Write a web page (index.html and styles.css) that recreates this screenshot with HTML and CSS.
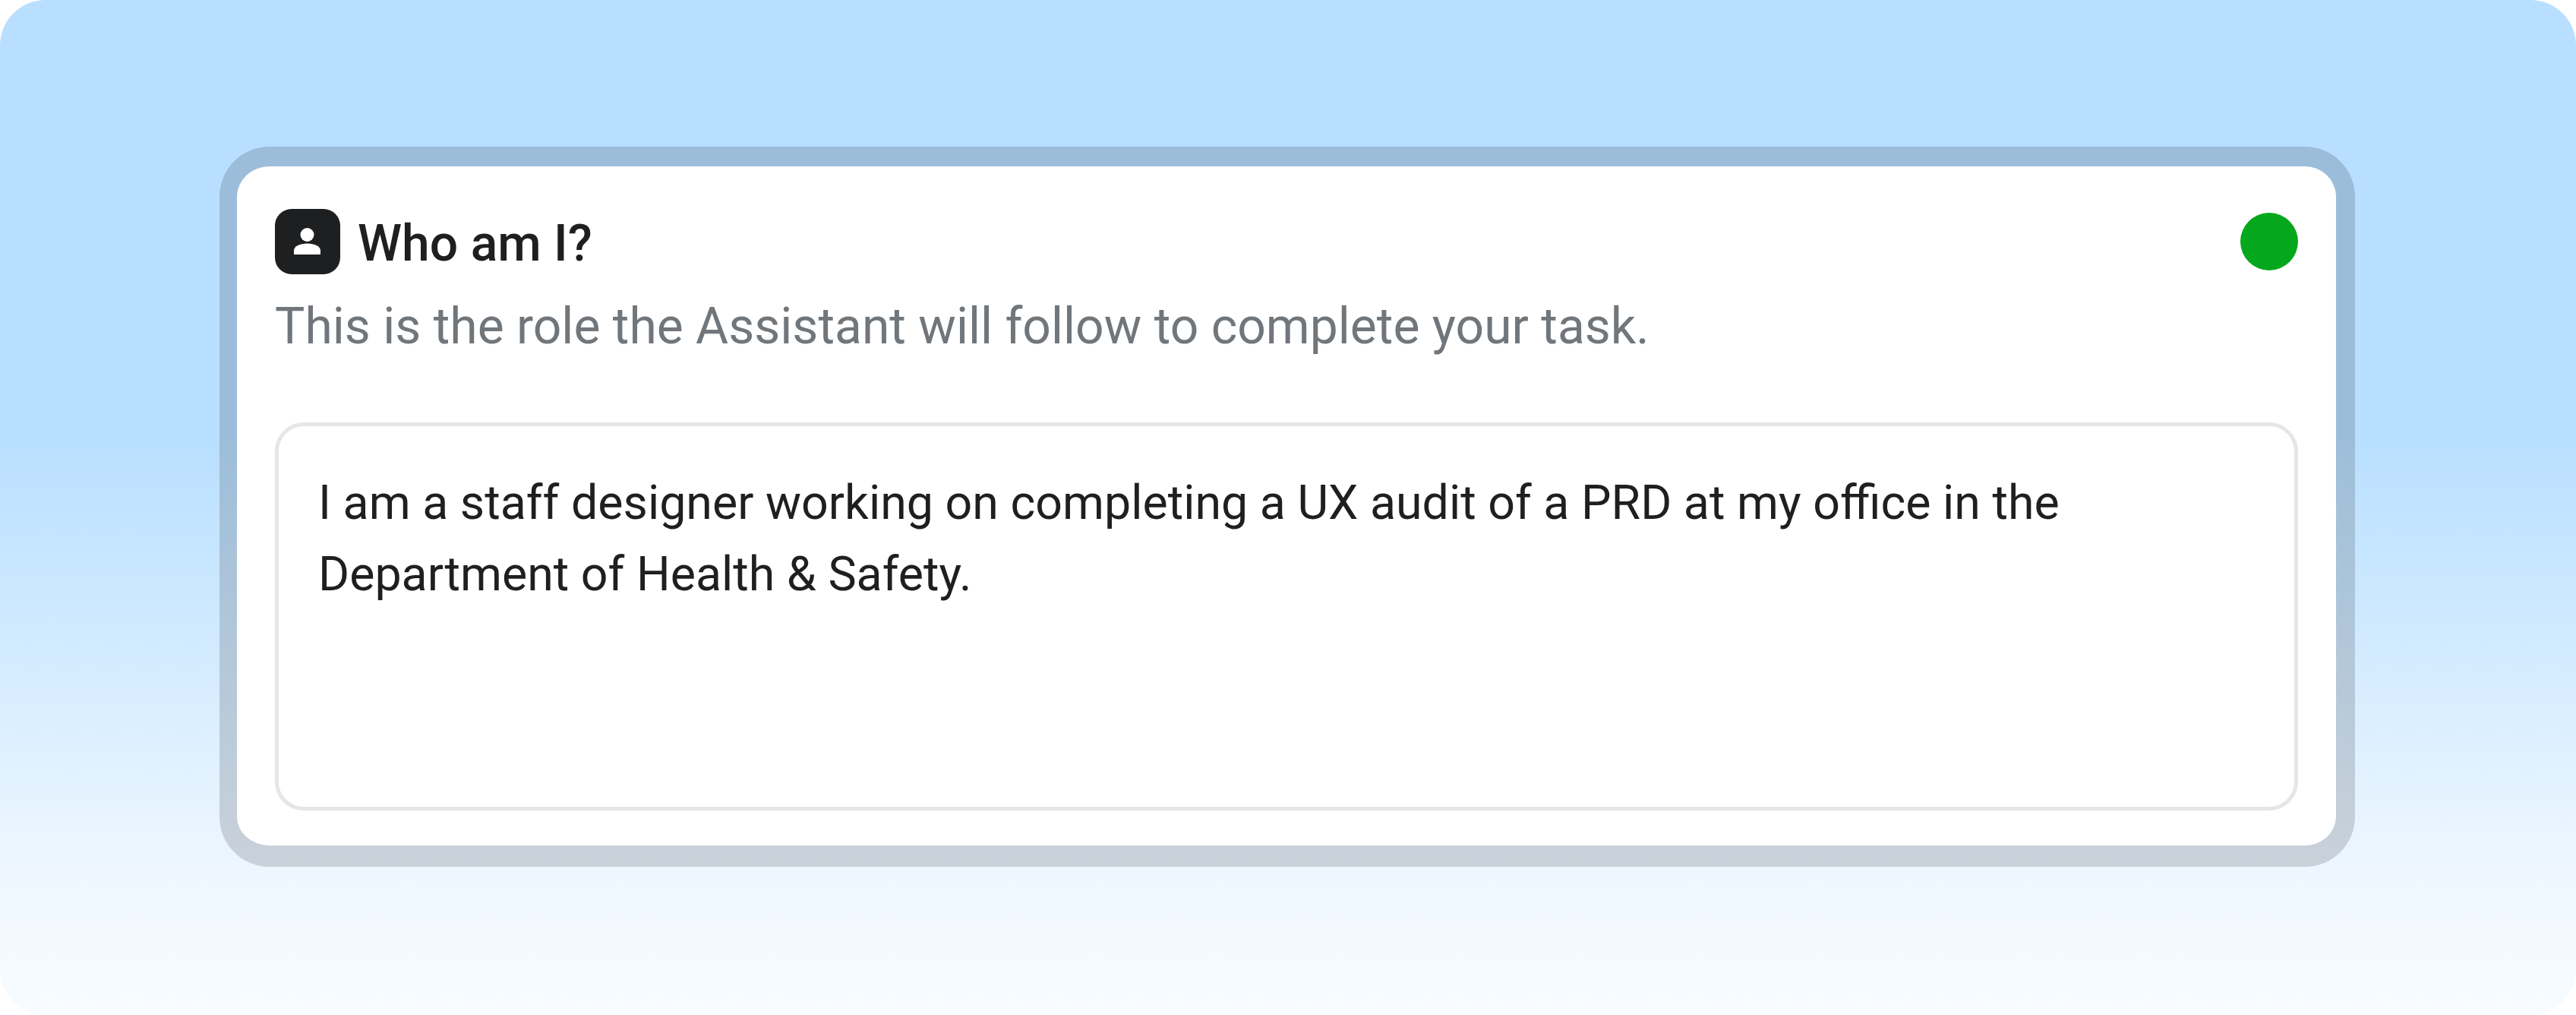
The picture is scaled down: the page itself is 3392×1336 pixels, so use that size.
FILE: index.html
```html
<!DOCTYPE html>
<html lang="en">

<head>
    <meta charset="UTF-8">
    <meta name="viewport" content="width=device-width, initial-scale=1.0">
    <title>Who am I?</title>
    <link rel="stylesheet" href="styles.css">
</head>

<body>
    <div class="backdrop">
        <div class="role-card">
            <div class="role-head">
                <div class="role-icon">
                    <svg width="86" height="86" viewBox="0 0 86 86">
                        <circle cx="42.500" cy="34" r="9" fill="#fff" />
                        <path d="M25 60v-5c0-6 8-9.500 17.500-9.500S60 49 60 55v5z" fill="#fff" />
                    </svg>
                </div>
                <h1 class="role-title">Who am I?</h1>
                <span class="status-dot"></span>
            </div>
            <p class="role-desc">This is the role the Assistant will follow to complete your task.</p>
            <div class="role-input">I am a staff designer working on completing a UX audit of a PRD at my office in the<br>Department of Health &amp; Safety.</div>
        </div>
    </div>
</body>

</html>
```

FILE: styles.css
```css
html,
body {
    margin: 0;
    background: #fff;
}

.backdrop {
    box-sizing: border-box;
    width: 3392px;
    height: 1336px;
    padding: 193px 291px 195px 289px;
    border-radius: 60px;
    background: linear-gradient(180deg, #b8dfff 0, #b8dfff 573px, #eef7ff 1150px, #f8fcff 1336px);
    font-family: "Roboto", "Liberation Sans", sans-serif;
}

/* the frame is see-through, so the gradient shows in it */
.role-card {
    box-sizing: border-box;
    height: 948px;
    padding: 56px 50px 44px 50px;
    border-style: solid;
    border-color: rgba(0, 0, 0, 0.15);
    border-width: 26px 25px 28px 23px;
    border-radius: 66px;
    background: #fff;
    background-clip: padding-box;
}

.role-head {
    display: flex;
    align-items: center;
    height: 86px;
}

.role-icon {
    width: 86px;
    height: 86px;
    border-radius: 22px;
    background: #1e1f20;
}

.role-icon svg {
    display: block;
}

.role-title {
    flex: 1;
    margin: 4px 0 0 23px;
    font-size: 66px;
    font-weight: 500;
    color: #1e1f20;
}

.status-dot {
    width: 76px;
    height: 76px;
    border-radius: 50%;
    background: #05a81c;
}

.role-desc {
    margin: 29px 0 0;
    font-size: 66px;
    line-height: 80px;
    color: #71767b;
}

.role-input {
    box-sizing: border-box;
    height: 511px;
    margin-top: 86px;
    padding: 54px 52px;
    border: 5px solid #e6e6e6;
    border-radius: 38px;
    font-size: 62.700px;
    line-height: 94px;
    color: #1e1f20;
}
```
